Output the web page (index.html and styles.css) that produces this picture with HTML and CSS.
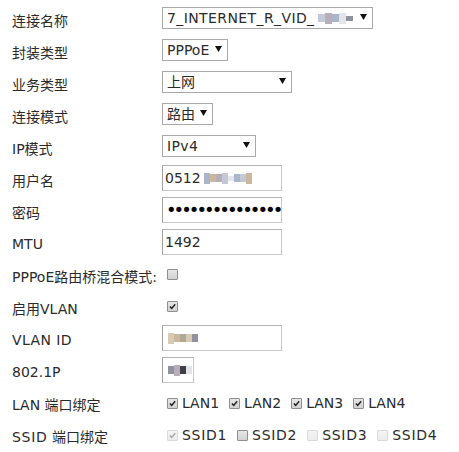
FILE: index.html
```html
<!DOCTYPE html>
<html lang="zh">
<head>
<meta charset="utf-8">
<title>WAN 连接</title>
<link rel="stylesheet" href="styles.css">
</head>
<body>
<div class="form">
  <div class="row">
    <div class="label">连接名称</div>
    <div class="select w-name">
      <span class="val wide">7_INTERNET_R_VID_<span class="mosaic big"><i class="b c1"></i><i class="b c2 t"></i><i class="b c3"></i><i class="b c7 t"></i><i class="b c5 s"></i></span></span>
      <svg class="arrow" viewBox="0 0 7 6"><path d="M0 0H7L3.5 6Z"/></svg>
    </div>
  </div>
  <div class="row">
    <div class="label">封装类型</div>
    <div class="select w-pppoe"><span class="val">PPPoE</span><svg class="arrow" viewBox="0 0 7 6"><path d="M0 0H7L3.5 6Z"/></svg></div>
  </div>
  <div class="row">
    <div class="label">业务类型</div>
    <div class="select w-svc"><span class="val">上网</span><svg class="arrow" viewBox="0 0 7 6"><path d="M0 0H7L3.5 6Z"/></svg></div>
  </div>
  <div class="row">
    <div class="label">连接模式</div>
    <div class="select w-mode"><span class="val">路由</span><svg class="arrow" viewBox="0 0 7 6"><path d="M0 0H7L3.5 6Z"/></svg></div>
  </div>
  <div class="row">
    <div class="label">IP模式</div>
    <div class="select w-ip"><span class="val wide">IPv4</span><svg class="arrow" viewBox="0 0 7 6"><path d="M0 0H7L3.5 6Z"/></svg></div>
  </div>
  <div class="row">
    <div class="label">用户名</div>
    <div class="input w-text"><span class="val">0512<span class="mosaic"><i class="b c3 t"></i><i class="b c6"></i><i class="b c2"></i><i class="b c1 t"></i><i class="b c7 s"></i><i class="b c3"></i><i class="b c1"></i><i class="b c6 t"></i></span></span></div>
  </div>
  <div class="row">
    <div class="label">密码</div>
    <div class="input w-text"><span class="val dots">••••••••••••••••</span></div>
  </div>
  <div class="row">
    <div class="label">MTU</div>
    <div class="input w-text"><span class="val">1492</span></div>
  </div>
  <div class="row">
    <div class="label">PPPoE路由桥混合模式:</div>
    <span class="cb cb-first"></span>
  </div>
  <div class="row">
    <div class="label">启用VLAN</div>
    <span class="cb cb-first on"><svg viewBox="0 0 11 11"><path d="M2.3 5.6L4.5 7.8L8.8 2.8"/></svg></span>
  </div>
  <div class="row">
    <div class="label wide">VLAN ID</div>
    <div class="input w-text"><span class="val"><span class="mosaic"><i class="b c4 t"></i><i class="b c6"></i><i class="b c8"></i><i class="b c4"></i><i class="b c5"></i></span></span></div>
  </div>
  <div class="row">
    <div class="label">802.1P</div>
    <div class="input w-prio"><span class="val"><span class="mosaic"><i class="b c5"></i><i class="b c2 t"></i><i class="b c9"></i><i class="b c7"></i></span></span></div>
  </div>
  <div class="row">
    <div class="label">LAN 端口绑定</div>
    <div class="checks">
      <label class="item"><span class="cb on"><svg viewBox="0 0 11 11"><path d="M2.3 5.6L4.5 7.8L8.8 2.8"/></svg></span>LAN1</label>
      <label class="item"><span class="cb on"><svg viewBox="0 0 11 11"><path d="M2.3 5.6L4.5 7.8L8.8 2.8"/></svg></span>LAN2</label>
      <label class="item"><span class="cb on"><svg viewBox="0 0 11 11"><path d="M2.3 5.6L4.5 7.8L8.8 2.8"/></svg></span>LAN3</label>
      <label class="item"><span class="cb on"><svg viewBox="0 0 11 11"><path d="M2.3 5.6L4.5 7.8L8.8 2.8"/></svg></span>LAN4</label>
    </div>
  </div>
  <div class="row">
    <div class="label"><span class="wider">SSID</span> 端口绑定</div>
    <div class="checks">
      <label class="item wider"><span class="cb dis on"><svg viewBox="0 0 11 11"><path d="M2.3 5.6L4.5 7.8L8.8 2.8"/></svg></span>SSID1</label>
      <label class="item wider"><span class="cb"></span>SSID2</label>
      <label class="item wider"><span class="cb dis"></span>SSID3</label>
      <label class="item wider"><span class="cb dis"></span>SSID4</label>
    </div>
  </div>
</div>
</body>
</html>
```
FILE: styles.css
```css
body {
  margin: 0;
  background: #fff;
  color: #2b2b2b;
  font-family: "DejaVu Sans", "Noto Sans CJK SC", sans-serif;
  font-size: 14px;
}

.form {
  padding: 2px 0 0 12px;
}

.row {
  display: flex;
  align-items: center;
  height: 32px;
}

.label {
  width: 150px;
  flex: none;
  padding-top: 3px;
  white-space: nowrap;
}

.wide { letter-spacing: 0.4px; }
.wider { letter-spacing: 0.7px; }

.select,
.input {
  box-sizing: border-box;
  display: flex;
  align-items: center;
  background: #fff;
  border: 1px solid #a9a9a9;
  overflow: visible;
  white-space: nowrap;
}

.select {
  height: 22px;
  justify-content: space-between;
  padding: 0 5px 0 4px;
}

.input {
  height: 26px;
  padding: 0 2px;
  border-color: #b4b4b4 #c8c8c8 #c8c8c8 #a0a0a0;
}

.val {
  display: inline-flex;
  align-items: center;
  line-height: 18px;
}

.arrow {
  width: 7px;
  height: 6px;
  margin-bottom: 2px;
  fill: #111;
  flex: none;
}

.w-name { width: 211px; }
.w-pppoe { width: 66px; }
.w-svc { width: 130px; }
.w-mode { width: 51px; }
.w-ip { width: 94px; }
.w-text { width: 120px; overflow: hidden; }
.w-prio { width: 32px; }

.dots {
  font-size: 18px;
  letter-spacing: -3px;
  color: #000;
  margin-left: 1px;
}

.mosaic {
  display: inline-flex;
  align-items: center;
  margin-left: 3px;
}

.b {
  display: block;
  width: 6px;
  height: 8px;
}
.b.s { height: 5px; }
.b.t { height: 11px; }
.mosaic.big .b { width: 7px; }
.c1 { background: #c3c7d6; }
.c2 { background: #b7aeb9; }
.c3 { background: #aab5c9; }
.c4 { background: #d8cbb6; }
.c5 { background: #8f939d; }
.c6 { background: #c9b79e; }
.c7 { background: #e3e5ea; }
.c8 { background: #b0a897; }
.c9 { background: #3f3f45; }

.checks {
  display: flex;
  align-items: center;
  gap: 10px;
}

.item {
  display: flex;
  align-items: center;
  padding-top: 2px;
}

.cb {
  box-sizing: border-box;
  display: inline-flex;
  width: 11px;
  height: 11px;
  margin: 0 4px 0 5px;
  border: 1px solid #8f8f8f;
  border-radius: 1px;
  background: linear-gradient(#e6e6e6, #d2d2d2);
  flex: none;
}

.item .cb { margin-left: 0; }
.checks .item:first-child .cb { margin-left: 5px; }

.cb svg {
  width: 100%;
  height: 100%;
  fill: none;
  stroke: #222;
  stroke-width: 1.8;
}

.cb.dis {
  border-color: #dadada;
  background: linear-gradient(#f4f4f4, #ececec);
}

.cb.dis svg {
  stroke: #a8a8a8;
}
```
